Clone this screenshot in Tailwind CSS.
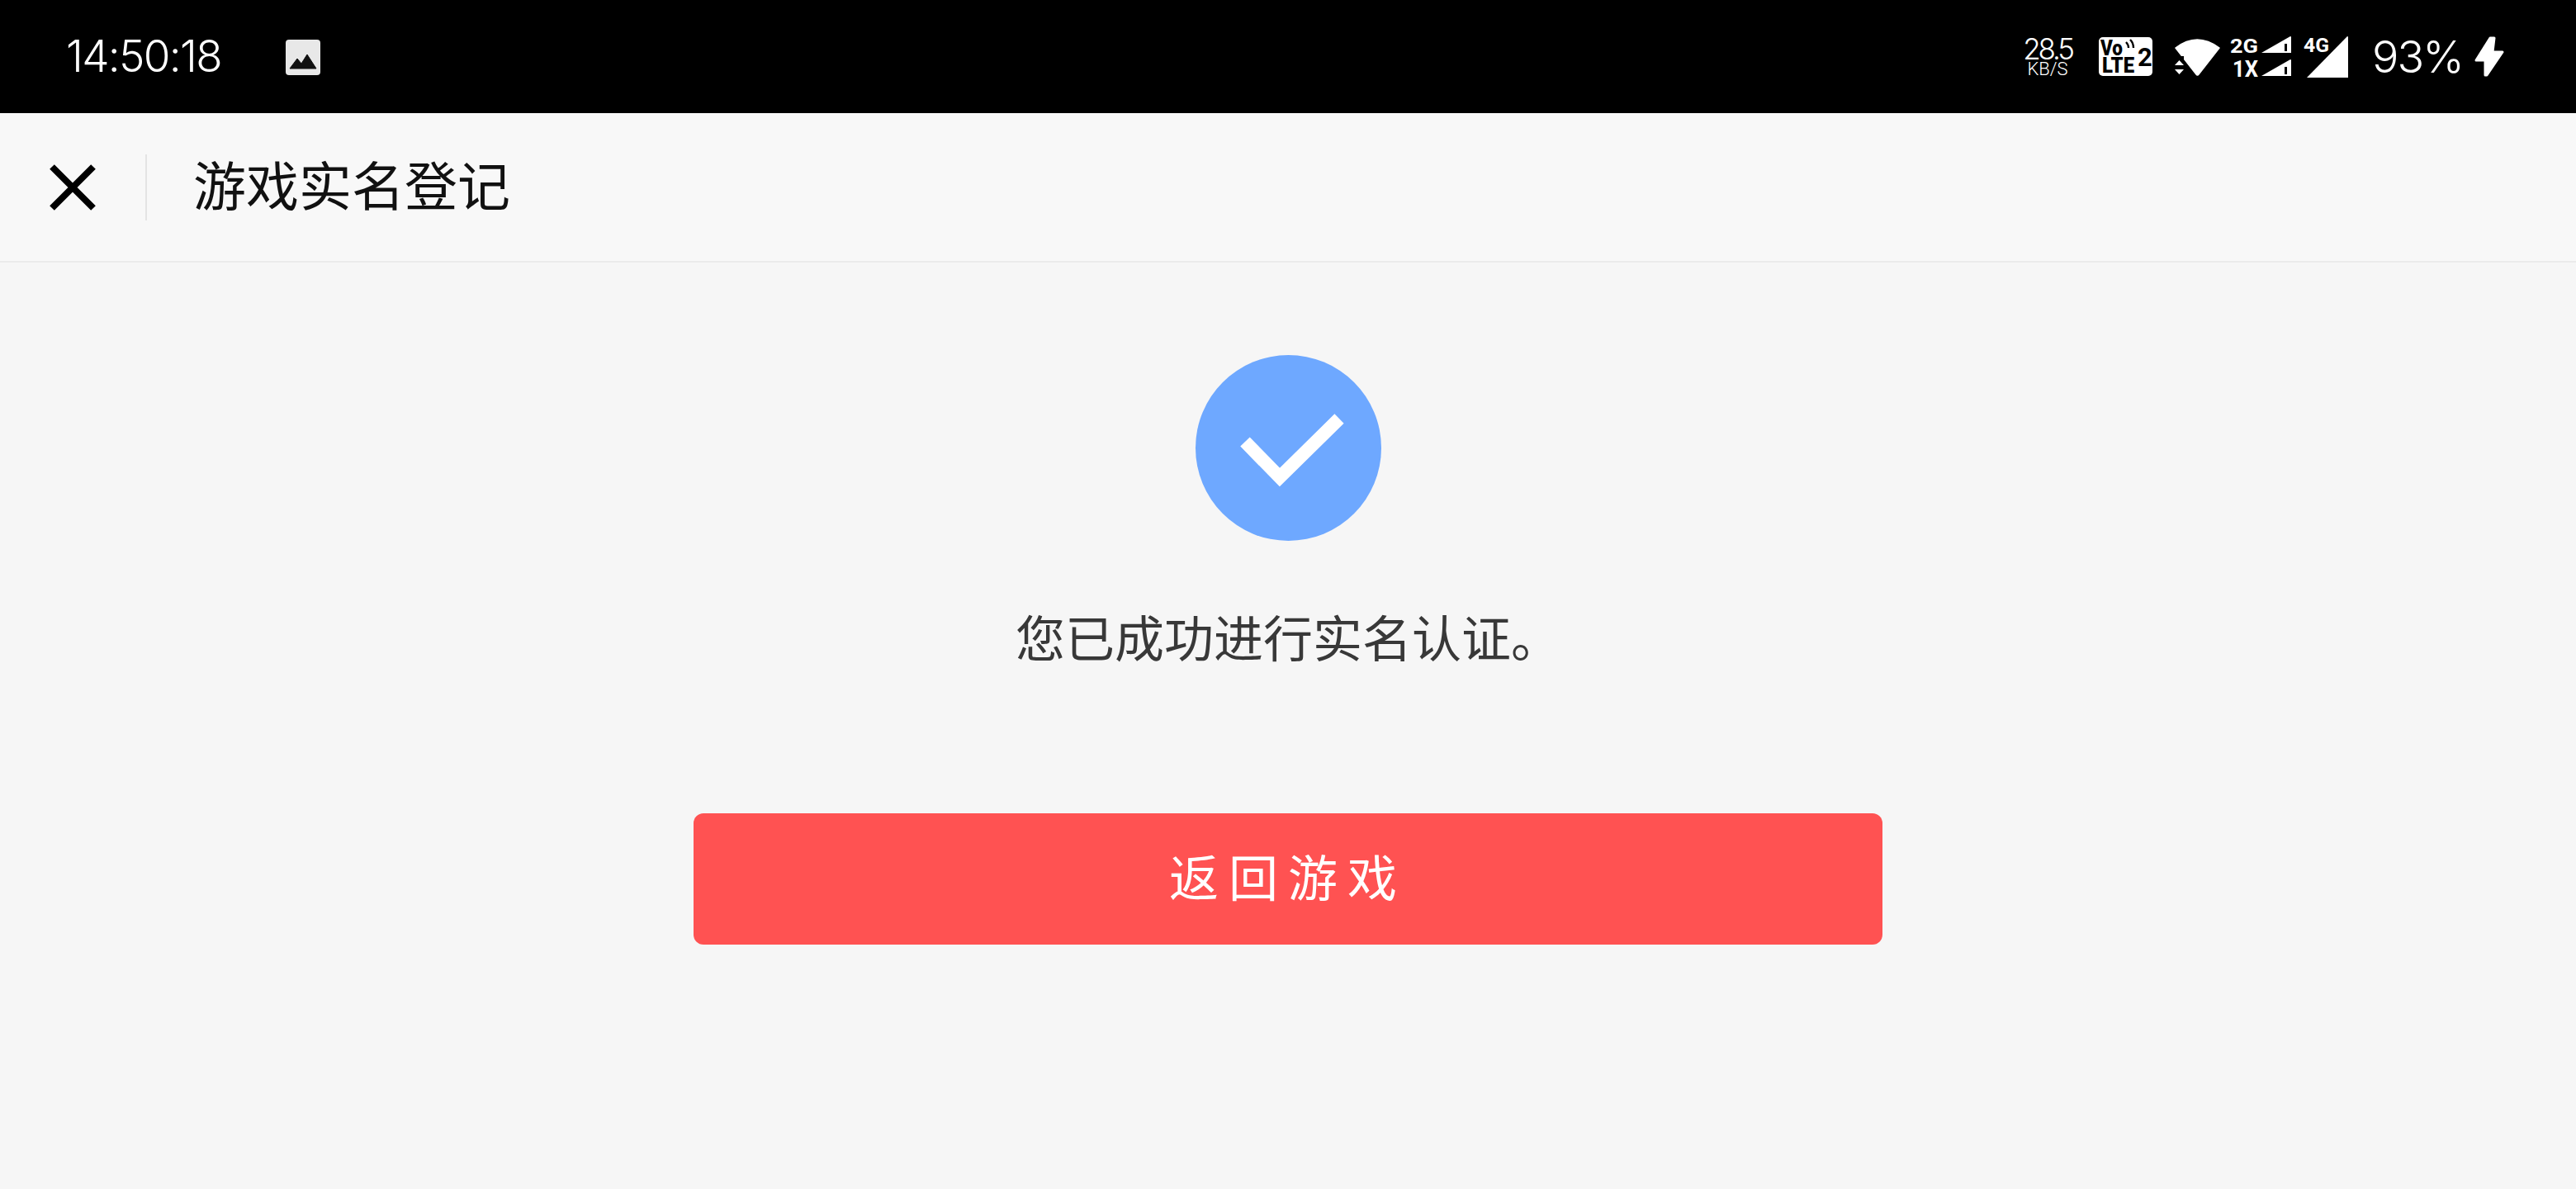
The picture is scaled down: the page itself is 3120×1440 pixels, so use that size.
<!DOCTYPE html>
<html lang="zh-CN">
<head>
    <meta charset="UTF-8">
    <title>游戏实名登记</title>
    <script src="https://cdn.jsdelivr.net/npm/@tailwindcss/browser@4"></script>
</head>
<body class="w-[3120px] h-[1440px] overflow-hidden bg-[#f6f6f6] font-['Roboto','Noto_Sans_CJK_SC',sans-serif]">
<!-- status bar -->
<div class="h-[137px] bg-black text-white flex items-center pl-[80px] pr-[87px]">
    <span class="w-[190px] font-['Inter'] text-[53px] leading-none font-light tracking-[-1.700px] whitespace-nowrap">14:50:18</span>
    <svg class="ml-[76px] w-[42px] h-[43px] mt-[1px]" viewBox="0 0 42 43">
        <rect width="42" height="43" rx="4" fill="#e8e8e8"/>
        <path d="M5 35 L14 23 L19 29 L26 18 L37 35 Z" fill="#111" stroke="#111" stroke-width="1" stroke-linejoin="round"/>
    </svg>

    <div class="ml-auto flex items-center">
        <div class="w-[60px] flex flex-col items-center mt-[1px] mr-[1px]">
            <span class="font-['Inter'] text-[35px] leading-[29px] font-light tracking-[-3.200px] whitespace-nowrap">28.5</span>
            <span class="text-[22px] leading-[19px] font-light whitespace-nowrap">KB/S</span>
        </div>
        <!-- volte -->
        <svg class="ml-[31px] w-[65px] h-[47px]" viewBox="0 0 65 47">
            <rect width="65" height="47" rx="5" fill="#fff"/>
            <text x="2" y="22" font-family="Roboto" font-weight="900" font-size="25" textLength="27" lengthAdjust="spacingAndGlyphs" fill="#000">Vo</text>
            <text x="4" y="43" font-family="Roboto" font-weight="900" font-size="25" textLength="39" lengthAdjust="spacingAndGlyphs" fill="#000">LTE</text>
            <text x="47" y="35" font-family="Roboto" font-weight="700" font-size="31" fill="#000">2</text>
            <path d="M33 6 Q36 9 36 13 M38 3 Q42 7 42 13" fill="none" stroke="#000" stroke-width="2.400"/>
        </svg>
        <!-- wifi -->
        <svg class="ml-[26px] w-[57px] h-[46px]" viewBox="0 0 57 46">
            <path d="M2 12 Q28 -8 55 12 L30 44 Q28.500 46 27 44 Z" fill="#fff" stroke="#fff" stroke-width="1.500" stroke-linejoin="round"/>
            <path d="M0 34 L12 34 L12 22 L0 22 Z M0 36 L14 36 L14 46 L0 46 Z" fill="#000"/>
            <path d="M1 33 L6.500 27 L12 33 Z M1 38 L12 38 L6.500 44 Z" fill="#fff"/>
        </svg>
        <!-- dual sim signal -->
        <svg class="ml-[11px] w-[74px] h-[50px]" viewBox="0 0 74 50">
            <text x="0" y="20" font-family="Roboto" font-weight="700" font-size="24" textLength="34" lengthAdjust="spacingAndGlyphs" fill="#fff">2G</text>
            <text x="3" y="49" font-family="Roboto" font-weight="700" font-size="27" textLength="31" lengthAdjust="spacingAndGlyphs" fill="#fff">1X</text>
            <path d="M38 20 L73 0 Q74 0 74 1 L74 20 Z" fill="#fff"/>
            <path d="M38 48 L73 28 Q74 28 74 29 L74 48 Z" fill="#fff"/>
            <rect x="66" y="9" width="3" height="9" fill="#000"/>
            <rect x="66" y="37" width="3" height="9" fill="#000"/>
        </svg>
        <!-- 4g signal -->
        <svg class="ml-[15px] w-[54px] h-[50px]" viewBox="0 0 54 50">
            <path d="M4 50 L53 0 Q54 0 54 1 L54 50 Z" fill="#fff"/>
            <text x="0" y="19" font-family="Roboto" font-weight="700" font-size="24" textLength="31" lengthAdjust="spacingAndGlyphs" stroke="#000" stroke-width="3" paint-order="stroke" fill="#fff">4G</text>
        </svg>
        <span class="ml-[29px] w-[107px] font-['Inter'] text-[54px] leading-none font-light tracking-[-2px] whitespace-nowrap">93%</span>
        <!-- charging -->
        <svg class="ml-[17px] w-[36px] h-[49px]" viewBox="0 0 36 49">
            <path d="M19 2 L24 2 L22 19 L34 19 L15 47 L13 47 L13 29 L2 29 Z" fill="#fff" stroke="#fff" stroke-width="3" stroke-linejoin="round"/>
        </svg>
    </div>
</div>

<!-- header -->
<div class="h-[181px] bg-[#f8f8f8] border-b-2 border-[#ebebeb] flex items-center">
    <svg class="ml-[60px] w-[56px] h-[56px]" viewBox="0 0 56 56">
        <path d="M3 3 L53 53 M53 3 L3 53" stroke="#000" stroke-width="8" fill="none"/>
    </svg>
    <div class="ml-[60px] w-[2px] h-[80px] bg-[#e4e4e4]"></div>
    <h1 class="ml-[56px] mt-[3px] text-[64px] leading-none font-normal text-[#111]">游戏实名登记</h1>
</div>

<!-- result -->
<div class="flex flex-col items-center pt-[112px]">
    <div class="w-[225px] h-[225px] rounded-full bg-[#6ea8ff] flex items-center justify-center">
        <svg class="w-[225px] h-[225px]" viewBox="0 0 225 225">
            <path d="M60 105 L102 148 L174 77" fill="none" stroke="#fff" stroke-width="16"/>
        </svg>
    </div>
    <p class="mt-[86px] text-[60px] leading-[70px] font-normal text-[#383838]">您已成功进行实名认证。</p>
    <button class="mt-[174px] w-[1440px] h-[159px] pt-[3px] rounded-xl bg-[#ff5252] text-white text-[60px] font-normal tracking-[12px]">返回游戏</button>
</div>
</body>
</html>
